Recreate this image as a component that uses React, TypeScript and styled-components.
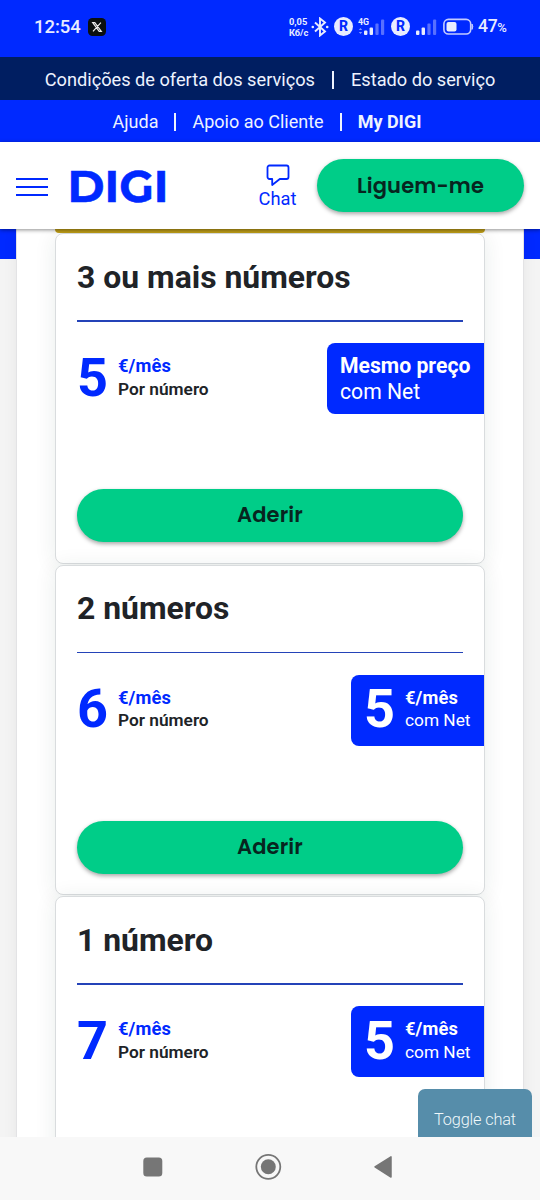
import React from "react";
import styled, { createGlobalStyle } from "styled-components";

const BLUE = "#0029ff";
const GREEN = "#00cd88";

const GlobalStyle = createGlobalStyle`
  * { box-sizing: border-box; }
  body { margin: 0; background: #fff; font-family: Roboto, "Liberation Sans", sans-serif; }
`;

const Screen = styled.div`
  width: 540px;
  height: 1200px;
  overflow: hidden;
  display: flex;
  flex-direction: column;
`;

const StatusBar = styled.div`
  flex: none;
  height: 57px;
  background: ${BLUE};
  color: #e8ecff;
  display: flex;
  align-items: center;
  padding: 0 32px 4px 34px;
`;

const Clock = styled.span`
  font-size: 18.5px;
  font-weight: 500;
  line-height: 22px;
  letter-spacing: -0.05px;
  margin-right: 7px;
`;

const StatusIcons = styled.div`
  margin-left: auto;
  display: flex;
  align-items: center;

  svg {
    flex: none;
  }
`;

const Speed = styled.div`
  flex: none;
  font-size: 9.3px;
  font-weight: 700;
  line-height: 11px;
  width: 22px;
  white-space: nowrap;
`;

const BatteryLevel = styled.span`
  flex: none;
  font-size: 17.5px;
  font-weight: 500;
  line-height: 22px;
  letter-spacing: -0.3px;
  margin-left: 4px;
  width: 30px;
  display: flex;
  align-items: baseline;
`;

const Percent = styled.span`
  font-size: 13px;
`;

const LinkBar = styled.nav<{ $dark?: boolean }>`
  flex: none;
  height: ${(p) => (p.$dark ? 43 : 42)}px;
  background: ${(p) => (p.$dark ? "#001e61" : BLUE)};
  display: flex;
  align-items: center;
  justify-content: center;
  padding: ${(p) => (p.$dark ? "2px 0 0" : "1px 6px 0 0")};
  color: #eef3ff;
  font-size: ${(p) => (p.$dark ? 18.2 : 18)}px;
  line-height: 22px;
  white-space: nowrap;
`;

const BarLink = styled.a<{ $bold?: boolean }>`
  font-weight: ${(p) => (p.$bold ? 700 : 400)};
`;

const Separator = styled.span<{ $gap?: number }>`
  width: 2px;
  height: 18px;
  background: #eef3ff;
  margin: 0 ${(p) => p.$gap || 16}px;
`;

const Header = styled.header`
  flex: none;
  height: 87px;
  background: #fff;
  display: flex;
  align-items: center;
  padding: 0 16px;
  z-index: 1;
  box-shadow: 0 1px 4px rgba(0, 0, 0, 0.45);
`;

const LogoMark = styled.svg`
  margin-left: 22px;
  overflow: visible;
`;

const ChatLink = styled.a`
  margin-left: auto;
  margin-right: 20px;
  width: 39px;
  padding-top: 3px;
  display: flex;
  flex-direction: column;
  align-items: center;
  color: ${BLUE};
  font-size: 18.3px;
  line-height: 24px;
`;

const PillButton = styled.button<{ $width?: string }>`
  flex: none;
  display: block;
  width: ${(p) => p.$width || "100%"};
  height: 53px;
  border: 0;
  padding: 0;
  border-radius: 27px;
  background: ${GREEN};
  color: #07251f;
  font-family: Poppins, Inter, sans-serif;
  font-size: 21px;
  font-weight: 600;
  line-height: 30px;
  letter-spacing: 0.15px;
  box-shadow: 0 2px 4px rgba(0, 0, 0, 0.35);
`;

const Main = styled.main`
  flex: none;
  height: 908px;
  overflow: hidden;
  display: flex;
  justify-content: center;
  background: linear-gradient(${BLUE} 30px, #f4f4f4 30px);
`;

const Panel = styled.section`
  width: 508px;
  height: 1100px;
  background: #fff;
  border: solid #e3e3e5;
  border-width: 0 1px;
  box-shadow: 0 0 14px rgba(0, 0, 0, 0.06);
  padding: 0 38px;
`;

const HighlightEdge = styled.div`
  height: 4px;
  background: #c3a018;
  border-radius: 0 0 5px 5px;
`;

const Card = styled.article`
  height: 330.6px;
  margin-bottom: 1px;
  border: 1px solid #d9dcde;
  border-radius: 8px;
  background: #fff;
  box-shadow: 0 2px 22px rgba(20, 50, 40, 0.09);
  padding: 0 21px;
`;

const CardTitle = styled.h2`
  margin: 0;
  height: 86.3px;
  padding-top: 22.9px;
  font-size: 31.9px;
  font-weight: 700;
  line-height: 40px;
  color: #202327;
`;

const Divider = styled.div`
  height: 1.4px;
  background: #2443b8;
`;

const PriceRow = styled.div`
  display: flex;
  justify-content: space-between;
  margin: 21.3px -21px 75px 0;
  height: 71px;
`;

const Price = styled.div`
  display: flex;
  align-items: center;
  padding-bottom: 1.4px;
  color: ${BLUE};
`;

const Amount = styled.strong`
  font-size: 54px;
  font-weight: 700;
  line-height: 60px;
  width: 41px;
`;

const Unit = styled.div`
  display: flex;
  flex-direction: column;
  font-size: 18.3px;
  line-height: 23.5px;
  font-weight: 700;
  letter-spacing: 0.1px;
  white-space: nowrap;
`;

const UnitNote = styled.span<{ $light?: boolean }>`
  font-size: 17.3px;
  letter-spacing: 0;
  font-weight: ${(p) => (p.$light ? 400 : 600)};
  color: ${(p) => (p.$light ? "#fff" : "#202327")};
`;

const Tag = styled.div<{ $width: number }>`
  width: ${(p) => p.$width}px;
  padding: 0 0 1.4px 13px;
  background: ${BLUE};
  color: #fff;
  border-radius: 8px 0 0 8px;
  display: flex;
  align-items: center;
`;

const TagText = styled.p`
  margin: 0;
  padding-top: 3px;
  font-size: 21.2px;
  line-height: 26.5px;
  white-space: nowrap;
`;

const ChatToggle = styled.div`
  position: absolute;
  left: 418px;
  top: 1089px;
  width: 114px;
  height: 48px;
  padding: 18px 0 0 16px;
  border-radius: 7px 7px 0 0;
  background: #568daa;
  color: #eff8fb;
  font-size: 16.3px;
  font-weight: 350;
  letter-spacing: -0.15px;
  line-height: 25px;
  white-space: nowrap;
`;

const SystemNav = styled.footer`
  flex: none;
  height: 63px;
  background: #f8f8f8;
`;

const AppBadge = () => (
  <svg width="18" height="18" viewBox="0 0 18 18">
    <rect width="18" height="18" rx="4.5" fill="#0b1010" />
    <path d="M4.7 4.7h2.1l6.5 8.6h-2.1zM12.9 4.7L5 13.3" fill="none" stroke="#eee" strokeWidth="1.2" />
  </svg>
);

const Bluetooth = () => (
  <svg width="18" height="20" viewBox="0 0 18 20" fill="none" stroke="#e8ecff" strokeWidth="1.9">
    <path d="M4 5.5l10 9L9 18.5V1.5l5 4-10 9" />
    <circle cx="1.8" cy="10" r="1.3" fill="#e8ecff" stroke="none" />
    <circle cx="16.2" cy="10" r="1.3" fill="#e8ecff" stroke="none" />
  </svg>
);

const RoamingBadge = styled.span<{ $left: number; $right: number }>`
  flex: none;
  width: 19px;
  height: 19px;
  border-radius: 50%;
  margin: 0 ${(p) => p.$right}px 0 ${(p) => p.$left}px;
  background: #e8ecff;
  color: ${BLUE};
  display: flex;
  align-items: center;
  justify-content: center;
  font-size: 14px;
  font-weight: 800;
  line-height: 19px;
`;

const Signal = ({ network }: { network?: string }) => (
  <svg width={network ? 27 : 21} height="20" viewBox={network ? "0 0 27 20" : "6 0 21 20"}>
    {network && (
      <>
        <text x="0" y="7.5" fontSize="8.8" fontWeight="700" fill="#e8ecff">{network}</text>
        <path d="M.8 13l1.7-2 1.7 2zM.8 15l1.7 2 1.7-2z" fill="#8297ff" />
      </>
    )}
    <rect x="6" y="13.5" width="3.4" height="4.5" rx="1" fill="#e8ecff" />
    <rect x="11.6" y="10.5" width="3.4" height="7.5" rx="1" fill="#e8ecff" />
    <rect x="17.4" y="6.5" width="3.2" height="11.5" rx="1" fill="#5870ff" />
    <rect x="23" y="2.5" width="3.2" height="15.5" rx="1" fill="#5870ff" />
  </svg>
);

const BatteryIcon = styled.svg`
  margin-left: 6px;
`;

const Battery = () => (
  <BatteryIcon width="31" height="18" viewBox="0 0 31 18">
    <rect x=".9" y="1.4" width="26.8" height="14.6" rx="4.5" fill="none" stroke="#c4ccff" strokeWidth="1.6" />
    <rect x="3.5" y="4" width="10" height="9.4" rx="2" fill="#e8ecff" />
    <path d="M29 6q1.6 2.7 0 5.4z" fill="#c4ccff" stroke="#c4ccff" />
  </BatteryIcon>
);

const MenuIcon = () => (
  <svg width="32" height="20" viewBox="0 0 32 20" stroke={BLUE} strokeWidth="2">
    <path d="M0 3h32M0 11h32M0 19h32" />
  </svg>
);

const Logo = () => (
  <LogoMark width="100" height="40" viewBox="0 0 100 40">
    <text x="-2.5" y="35.5" fontFamily="Montserrat, Lato, sans-serif" fontWeight="700" fontSize="44.500" fill={BLUE} stroke={BLUE} strokeWidth=".5" textLength="101" lengthAdjust="spacingAndGlyphs">
      DIGI
    </text>
  </LogoMark>
);

const ChatIcon = () => (
  <svg width="24" height="23" viewBox="0 0 24 23" fill="none" stroke={BLUE} strokeWidth="1.8" strokeLinejoin="round">
    <path d="M3.5 1.500h17a2 2 0 0 1 2 2v9.500a2 2 0 0 1-2 2h-6.700l-7.600 6v-6H3.500a2 2 0 0 1-2-2V3.500a2 2 0 0 1 2-2z" />
  </svg>
);

const NavIcons = () => (
  <svg width="540" height="63" viewBox="0 0 540 63" fill="#767676">
    <rect x="143.300" y="20.500" width="19" height="19" rx="3.500" />
    <circle cx="268.300" cy="29.800" r="12" fill="none" stroke="#767676" strokeWidth="1.800" />
    <circle cx="268.300" cy="29.800" r="7.500" />
    <path d="M375 29.900L391 19.800V40z" stroke="#767676" strokeWidth="1.500" strokeLinejoin="round" />
  </svg>
);

interface Plan {
  title: string;
  price: string;
  netPrice?: string;
}

const plans: Plan[] = [
  { title: "3 ou mais números", price: "5" },
  { title: "2 números", price: "6", netPrice: "5" },
  { title: "1 número", price: "7", netPrice: "5" },
];

const PlanCard = ({ title, price, netPrice }: Plan) => (
  <Card>
    <CardTitle>{title}</CardTitle>
    <Divider />
    <PriceRow>
      <Price>
        <Amount>{price}</Amount>
        <Unit>
          €/mês
          <UnitNote>Por número</UnitNote>
        </Unit>
      </Price>
      {netPrice ? (
        <Tag $width={133}>
          <Amount>{netPrice}</Amount>
          <Unit>
            €/mês
            <UnitNote $light>com Net</UnitNote>
          </Unit>
        </Tag>
      ) : (
        <Tag $width={157}>
          <TagText>
            <b>Mesmo preço</b>
            <br />
            com Net
          </TagText>
        </Tag>
      )}
    </PriceRow>
    <PillButton>Aderir</PillButton>
  </Card>
);

// The last plan runs below the fold, so its button is not rendered.
const CutOffPlanCard = ({ title, price, netPrice }: Plan) => (
  <Card>
    <CardTitle>{title}</CardTitle>
    <Divider />
    <PriceRow>
      <Price>
        <Amount>{price}</Amount>
        <Unit>
          €/mês
          <UnitNote>Por número</UnitNote>
        </Unit>
      </Price>
      <Tag $width={133}>
        <Amount>{netPrice}</Amount>
        <Unit>
          €/mês
          <UnitNote $light>com Net</UnitNote>
        </Unit>
      </Tag>
    </PriceRow>
  </Card>
);

export default function App() {
  return (
    <Screen>
      <GlobalStyle />
      <StatusBar>
        <Clock>12:54</Clock>
        <AppBadge />
        <StatusIcons>
          <Speed>
            0,05
            <br />
            Кб/с
          </Speed>
          <Bluetooth />
          <RoamingBadge $left={5} $right={5}>R</RoamingBadge>
          <Signal network="4G" />
          <RoamingBadge $left={6} $right={6}>R</RoamingBadge>
          <Signal />
          <Battery />
          <BatteryLevel>
            47<Percent>%</Percent>
          </BatteryLevel>
        </StatusIcons>
      </StatusBar>
      <LinkBar $dark>
        <BarLink>Condições de oferta dos serviços</BarLink>
        <Separator $gap={17} />
        <BarLink>Estado do serviço</BarLink>
      </LinkBar>
      <LinkBar>
        <BarLink>Ajuda</BarLink>
        <Separator />
        <BarLink>Apoio ao Cliente</BarLink>
        <Separator />
        <BarLink $bold>My DIGI</BarLink>
      </LinkBar>
      <Header>
        <MenuIcon />
        <Logo />
        <ChatLink>
          <ChatIcon />
          Chat
        </ChatLink>
        <PillButton $width="207px">Liguem-me</PillButton>
      </Header>
      <Main>
        <Panel>
          <HighlightEdge />
          {plans.slice(0, 2).map((plan) => (
            <PlanCard key={plan.title} {...plan} />
          ))}
          <CutOffPlanCard {...plans[2]} />
        </Panel>
      </Main>
      <ChatToggle>Toggle chat</ChatToggle>
      <SystemNav>
        <NavIcons />
      </SystemNav>
    </Screen>
  );
}
